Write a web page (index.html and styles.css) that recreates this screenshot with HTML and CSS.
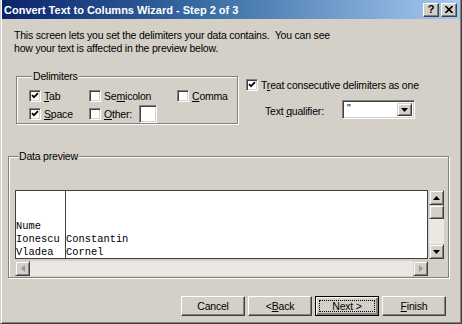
FILE: index.html
```html
<!DOCTYPE html>
<html>
<head>
<meta charset="utf-8">
<link rel="stylesheet" href="styles.css">
</head>
<body>
<div class="window">
  <div class="titlebar">
    <span class="title">Convert Text to Columns Wizard - Step 2 of 3</span>
    <div class="tbtns">
      <span class="tbtn help">?</span>
      <span class="tbtn close"><svg width="8" height="7" viewBox="0 0 8 7"><path d="M0.5 0 L7.5 7 M7.5 0 L0.5 7" stroke="#000" stroke-width="1.6"/></svg></span>
    </div>
  </div>
  <div class="content">
    <p class="intro">This screen lets you set the delimiters your data contains.&nbsp; You can see<br>how your text is affected in the preview below.</p>
    <div class="top-row">
      <fieldset class="group delims">
        <legend>Delimiters</legend>
        <div class="delim-grid">
          <label class="cb"><span class="box checked"><svg width="8" height="8" viewBox="0 0 8 8"><path d="M1 3.2 L3 5.2 L7 1.2" fill="none" stroke="#000" stroke-width="1.8"/></svg></span><span><u>T</u>ab</span></label>
          <label class="cb"><span class="box"></span><span>Se<u>m</u>icolon</span></label>
          <label class="cb"><span class="box"></span><span><u>C</u>omma</span></label>
          <label class="cb"><span class="box checked"><svg width="8" height="8" viewBox="0 0 8 8"><path d="M1 3.2 L3 5.2 L7 1.2" fill="none" stroke="#000" stroke-width="1.8"/></svg></span><span><u>S</u>pace</span></label>
          <label class="cb"><span class="box"></span><span><u>O</u>ther:</span><span class="textbox"></span></label>
        </div>
      </fieldset>
      <div class="options">
        <label class="cb"><span class="box checked"><svg width="8" height="8" viewBox="0 0 8 8"><path d="M1 3.2 L3 5.2 L7 1.2" fill="none" stroke="#000" stroke-width="1.8"/></svg></span><span>T<u>r</u>eat consecutive delimiters as one</span></label>
        <div class="qualifier">
          <span class="qlabel">Text <u>q</u>ualifier:</span>
          <div class="combo">
            <span class="combo-val">"</span>
            <span class="combo-btn"><svg width="7" height="4" viewBox="0 0 7 4"><path d="M0 0 H7 L3.5 4 Z" fill="#000"/></svg></span>
          </div>
        </div>
      </div>
    </div>
    <fieldset class="group preview">
      <legend>Data preview</legend>
      <div class="preview-area">
        <div class="preview-main">
          <div class="viewport">
            <div class="col col1">
              <div>Nume</div>
              <div>Ionescu</div>
              <div>Vladea</div>
            </div>
            <div class="col col2">
              <div>&nbsp;</div>
              <div>Constantin</div>
              <div>Cornel</div>
            </div>
          </div>
          <div class="hscroll">
            <span class="sbtn"><svg width="4" height="7" viewBox="0 0 4 7"><path d="M4 0 V7 L0 3.5 Z" fill="#9A9890"/></svg></span>
            <span class="htrack"></span>
            <span class="sbtn"><svg width="4" height="7" viewBox="0 0 4 7"><path d="M0 0 V7 L4 3.5 Z" fill="#9A9890"/></svg></span>
          </div>
        </div>
        <div class="vscroll">
          <span class="sbtn"><svg width="7" height="4" viewBox="0 0 7 4"><path d="M0 4 H7 L3.5 0 Z" fill="#000"/></svg></span>
          <span class="sbtn thumb"></span>
          <span class="vtrack"></span>
          <span class="sbtn"><svg width="7" height="4" viewBox="0 0 7 4"><path d="M0 0 H7 L3.5 4 Z" fill="#000"/></svg></span>
        </div>
      </div>
    </fieldset>
    <div class="buttons">
      <button class="btn">Cancel</button>
      <button class="btn">&lt; <u>B</u>ack</button>
      <button class="btn default"><span class="focus">Next &gt;</span></button>
      <button class="btn"><u>F</u>inish</button>
    </div>
  </div>
</div>
</body>
</html>
```

FILE: styles.css
```css
* { box-sizing: border-box; }

html, body {
  margin: 0;
  padding: 0;
}

body {
  width: 462px;
  height: 324px;
  overflow: hidden;
  background: #D4D0C8;
  font-family: "Liberation Sans", Arial, sans-serif;
  font-size: 10.5px;
  letter-spacing: -0.2px;
  color: #000;
}

.window {
  width: 462px;
  height: 324px;
  background: #D4D0C8;
  border-left: 1px solid #D4D0C8;
  border-right: 1px solid #404040;
  border-bottom: 1px solid #404040;
  box-shadow: inset 1px 0 #fff, inset -1px -1px #808080;
  padding: 0 1px 1px 1px;
  display: flex;
  flex-direction: column;
}

.titlebar {
  height: 19px;
  flex: none;
  display: flex;
  align-items: center;
  justify-content: space-between;
  padding: 0 3px 0 2px;
  background: linear-gradient(to right, #0A246A, #3A6EA5 45%, #A6CAF0);
}

.title {
  font-family: "Liberation Sans", sans-serif;
  font-weight: bold;
  font-size: 11px;
  letter-spacing: 0;
  color: #fff;
  white-space: nowrap;
}

.tbtns {
  display: flex;
  gap: 2px;
}

.tbtn {
  width: 16px;
  height: 14px;
  background: #D4D0C8;
  border: 1px solid;
  border-color: #fff #404040 #404040 #fff;
  box-shadow: inset -1px -1px #808080;
  display: flex;
  align-items: center;
  justify-content: center;
  font-family: "Liberation Sans", sans-serif;
  font-weight: bold;
  font-size: 11px;
  letter-spacing: 0;
  line-height: 1;
}

.content {
  flex: 1;
  padding: 10px 10px 0 6px;
  display: flex;
  flex-direction: column;
}

.intro {
  margin: 0 0 0 6px;
  line-height: 13px;
  white-space: nowrap;
}

.top-row {
  display: flex;
  margin-top: 15px;
}

.group {
  margin: 0;
  padding: 0;
  border: 1px solid #808080;
  box-shadow: inset 1px 1px #fff, 1px 1px #fff;
  min-width: 0;
}

.group legend {
  margin-left: 3px;
  padding: 0 1px;
  line-height: 12px;
  height: 12px;
  background: #D4D0C8;
}

.delims {
  margin-left: 8px;
  width: 222px;
  height: 54px;
  padding: 5px 0 0 12px;
}

.delim-grid {
  display: grid;
  grid-template-columns: 60px 88px auto;
  grid-auto-rows: 18px;
}

.cb {
  display: flex;
  align-items: center;
  gap: 3px;
  white-space: nowrap;
}

.box {
  width: 12px;
  height: 12px;
  flex: none;
  background: #fff;
  border: 1px solid;
  border-color: #808080 #fff #fff #808080;
  box-shadow: inset 1px 1px #404040, inset -1px -1px #D4D0C8;
  display: flex;
  align-items: center;
  justify-content: center;
}

.textbox {
  width: 18px;
  height: 18px;
  margin-left: 4px;
  background: #fff;
  border: 1px solid;
  border-color: #808080 #fff #fff #808080;
  box-shadow: inset 1px 1px #404040, inset -1px -1px #D4D0C8;
}

.options {
  margin-left: 8px;
  padding-top: 8px;
  display: flex;
  flex-direction: column;
}

.options > .cb {
  height: 13px;
}

.qualifier {
  display: flex;
  align-items: center;
  margin-top: 9px;
  padding-left: 19px;
}

.qlabel {
  width: 77px;
  padding-top: 3px;
}

.combo {
  width: 73px;
  height: 19px;
  background: #fff;
  border: 1px solid;
  border-color: #808080 #fff #fff #808080;
  box-shadow: inset 1px 1px #404040, inset -1px -1px #D4D0C8;
  display: flex;
  padding: 2px;
}

.combo-val {
  flex: 1;
  padding-left: 2px;
  line-height: 11px;
}

.combo-btn {
  width: 15px;
  height: 13px;
  background: #D4D0C8;
  border: 1px solid;
  border-color: #D4D0C8 #404040 #404040 #D4D0C8;
  box-shadow: inset 1px 1px #fff, inset -1px -1px #808080;
  display: flex;
  align-items: center;
  justify-content: center;
}

.preview {
  margin-top: 26px;
  width: 441px;
  height: 128px;
  padding: 28px 0 0 6px;
}

.preview-area {
  display: flex;
}

.preview-main {
  display: flex;
  flex-direction: column;
  width: 413px;
}

.viewport {
  height: 69px;
  background: #fff;
  border: 1px solid #404040;
  display: flex;
  font-family: "Liberation Mono", monospace;
  font-size: 10.4px;
  letter-spacing: 0;
  line-height: 13px;
  overflow: hidden;
}

.col {
  white-space: nowrap;
  padding-top: 29px;
}

.col1 {
  width: 50px;
  border-right: 1px solid #404040;
}

.col2 {
  flex: 1;
}

.hscroll {
  display: flex;
  height: 15px;
  margin-top: 2px;
  background: #EAE8E3;
}

.sbtn {
  width: 15px;
  height: 15px;
  flex: none;
  background: #D4D0C8;
  border: 1px solid;
  border-color: #D4D0C8 #404040 #404040 #D4D0C8;
  box-shadow: inset 1px 1px #fff, inset -1px -1px #808080;
  display: flex;
  align-items: center;
  justify-content: center;
}

.htrack {
  flex: 1;
}

.vscroll {
  width: 15px;
  height: 69px;
  margin-left: 1px;
  display: flex;
  flex-direction: column;
  background: #EAE8E3;
}

.vscroll .thumb {
  height: 14px;
}

.vtrack {
  flex: 1;
}

.buttons {
  display: flex;
  justify-content: flex-end;
  gap: 3px;
  margin-top: 18px;
  padding-right: 4px;
}

.btn {
  width: 64px;
  height: 20px;
  padding: 0;
  margin: 0;
  background: #D4D0C8;
  border: 1px solid;
  border-color: #fff #404040 #404040 #fff;
  box-shadow: inset -1px -1px #808080;
  font-family: "Liberation Sans", Arial, sans-serif;
  font-size: 10.5px;
  letter-spacing: -0.2px;
  color: #000;
  display: flex;
  align-items: center;
  justify-content: center;
}

.btn.default {
  border: 1px solid #000;
  box-shadow: inset 1px 1px #fff, inset -2px -2px #808080, inset -1px -1px #404040;
  padding: 3px;
}

.focus {
  flex: 1;
  align-self: stretch;
  border: 1px dotted #000;
  display: flex;
  align-items: center;
  justify-content: center;
}
```
